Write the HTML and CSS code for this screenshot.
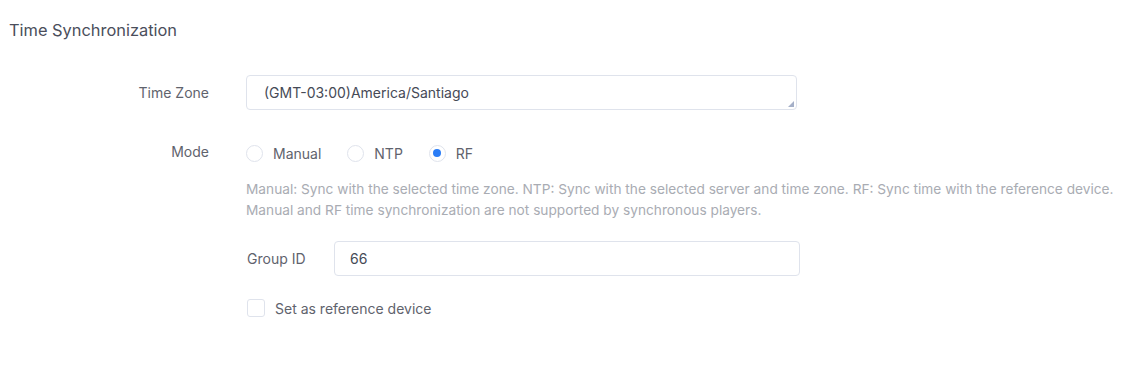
FILE: index.html
```html
<!DOCTYPE html>
<html>
<head>
  <meta charset="UTF-8">
  <title>Time Synchronization</title>
  <link rel="stylesheet" href="styles.css">
</head>
<body>
  <section class="panel">
    <h2 class="panel-title">Time Synchronization</h2>

    <div class="form-row row-zone">
      <label class="form-label">Time Zone</label>
      <div class="select-box">
        <span>(GMT-03:00)America/Santiago</span>
        <span class="resize-grip"></span>
      </div>
    </div>

    <div class="form-row row-mode">
      <label class="form-label">Mode</label>
      <div class="radio-group">
        <label class="radio"><span class="radio-dot"></span>Manual</label>
        <label class="radio"><span class="radio-dot"></span>NTP</label>
        <label class="radio checked"><span class="radio-dot"></span>RF</label>
      </div>
    </div>

    <div class="form-body">
      <p class="help">Manual: Sync with the selected time zone. NTP: Sync with the selected server and time zone. RF: Sync time with the reference device.<br>Manual and RF time synchronization are not supported by synchronous players.</p>

      <div class="sub-row">
        <label class="sub-label">Group ID</label>
        <div class="text-input">66</div>
      </div>

      <label class="check">
        <span class="check-box"></span>Set as reference device
      </label>
    </div>
  </section>
</body>
</html>
```

FILE: styles.css
```css
/* General */
body {
  font-family: 'Inter', 'Liberation Sans', sans-serif;
  font-size: 14px;
  color: #5f636d;
  margin: 0;
  padding: 0;
  background: #fff;
}

.panel {
  padding: 20px 9px 0 9px;
}

.panel-title {
  margin: 0 0 35px 0;
  font-size: 16.4px;
  font-weight: normal;
  line-height: 20px;
  color: #4a4e5b;
}

/* Form rows */
.form-row {
  display: flex;
  align-items: center;
}

.form-label {
  width: 200px;
  margin-right: 37px;
  text-align: right;
}

.row-zone {
  height: 34px;
}

.row-mode {
  margin-top: 33px;
  height: 22px;
}

.row-mode .form-label {
  margin-top: -4px;
}

.select-box {
  position: relative;
  box-sizing: border-box;
  width: 551px;
  height: 35px;
  border: 1px solid #dfe3ec;
  border-radius: 4px;
  padding: 0 17px;
  display: flex;
  align-items: center;
  color: #464a56;
}

.resize-grip {
  position: absolute;
  right: 2px;
  bottom: 2px;
  width: 0;
  height: 0;
  border-left: 6px solid transparent;
  border-bottom: 6px solid #a5b0c8;
}

/* Radios */
.radio-group {
  display: flex;
  align-items: center;
}

.radio {
  display: flex;
  align-items: center;
}

.radio + .radio {
  margin-left: 26px;
}

.radio-dot {
  box-sizing: border-box;
  width: 17px;
  height: 17px;
  border: 1px solid #dfe3ec;
  border-radius: 50%;
  margin-right: 10px;
  position: relative;
}

.radio.checked .radio-dot::after {
  content: '';
  position: absolute;
  left: 3.5px;
  top: 3.5px;
  width: 8px;
  height: 8px;
  border-radius: 50%;
  background: #2b7df6;
}

/* Lower block */
.form-body {
  padding-left: 237px;
}

.help {
  margin: 15px 0 0 0;
  font-size: 13.7px;
  line-height: 21px;
  color: #a9acb3;
  white-space: nowrap;
}

.sub-row {
  display: flex;
  align-items: center;
  margin-top: 20px;
}

.sub-label {
  width: 88px;
  padding-left: 1px;
  box-sizing: border-box;
}

.text-input {
  box-sizing: border-box;
  width: 466px;
  height: 35px;
  border: 1px solid #dfe3ec;
  border-radius: 4px;
  padding: 0 15px;
  display: flex;
  align-items: center;
  color: #464a56;
}

.check {
  display: flex;
  align-items: center;
  margin-top: 23px;
  margin-left: 1px;
}

.check-box {
  box-sizing: border-box;
  width: 18px;
  height: 18px;
  border: 1px solid #dfe3ec;
  border-radius: 3px;
  margin-right: 10px;
}
```
